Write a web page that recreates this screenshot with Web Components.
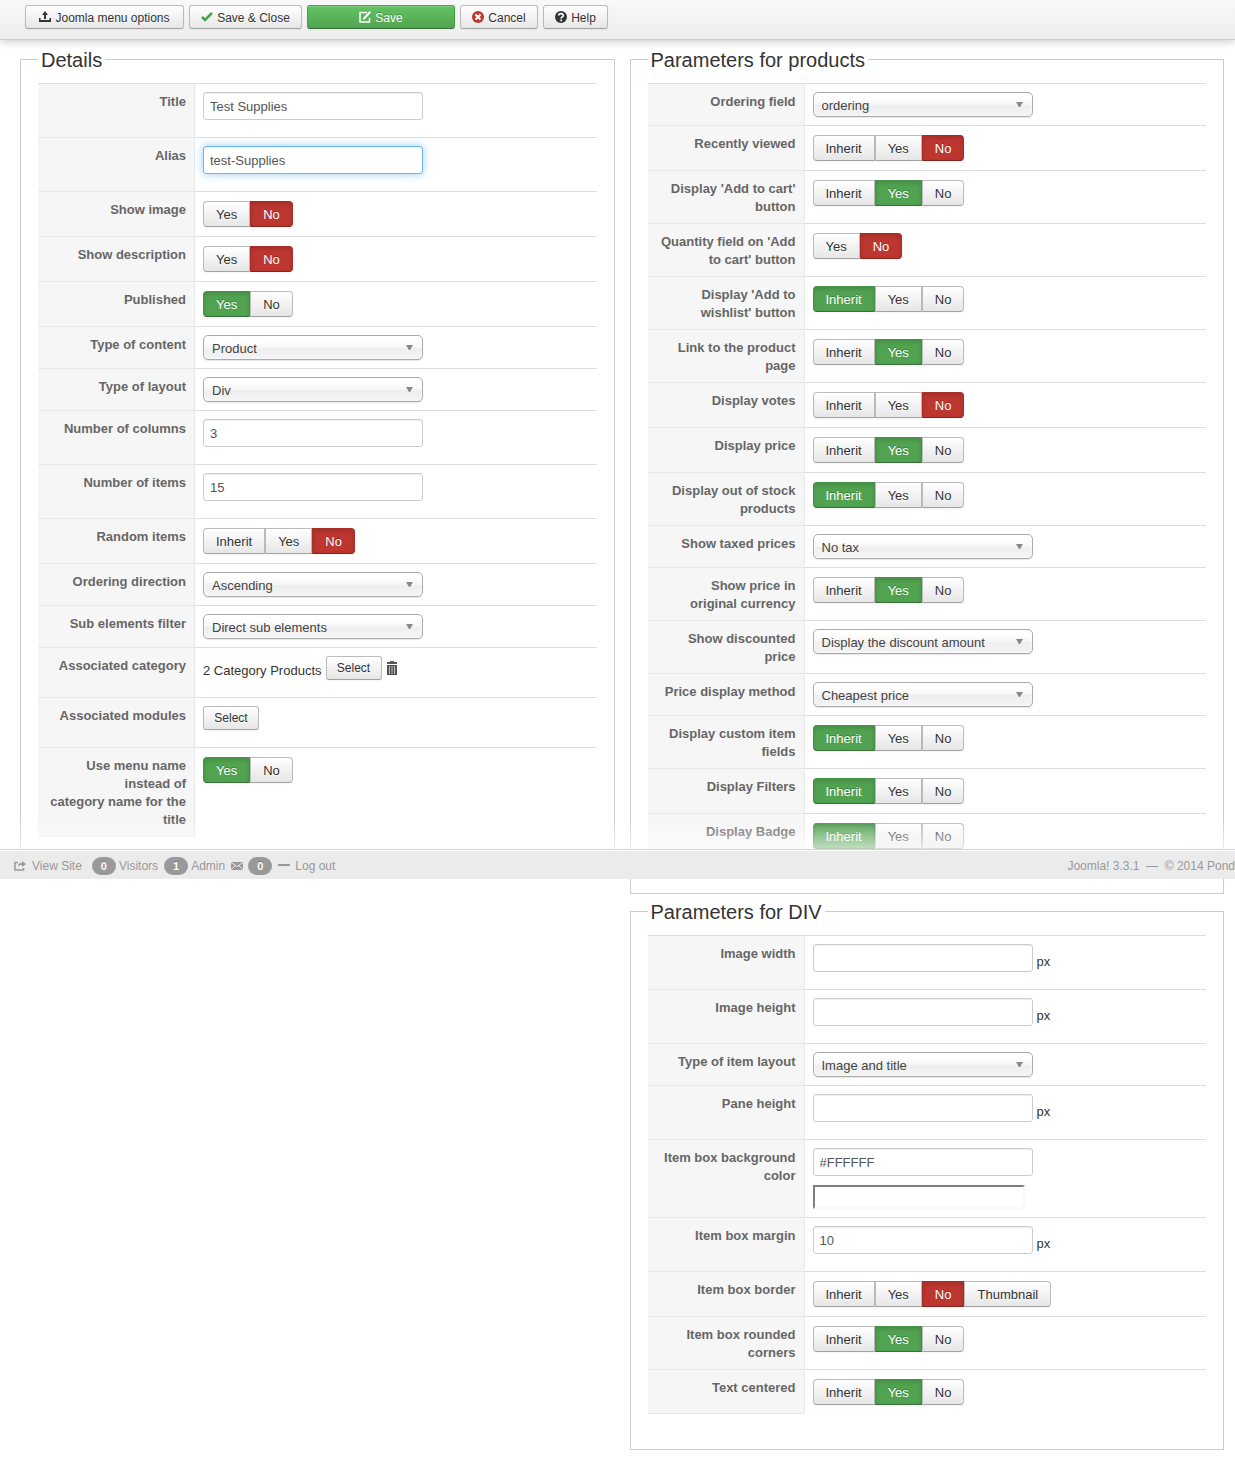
<!DOCTYPE html>
<html lang="en">
<head>
    <meta charset="utf-8" />
    <title>Joomla menu options</title>
    <style>
        body {
            margin: 0;
            position: relative;
            background: #fff;
            color: #333;
            font: 13px/18px "Liberation Sans", Arial, sans-serif;
        }
        main {
            display: grid;
            grid-template-columns: 1fr 1fr;
            align-items: start;
            gap: 15px;
            padding: 8px 11px 14px 20px;
        }
        .column {
            display: grid;
            gap: 6px;
        }
    </style>
</head>
<body>
    <tool-bar>
        <tool-button icon="upload" style="--width: 159px">Joomla menu options</tool-button>
        <tool-button icon="check" style="--width: 113px">Save &amp; Close</tool-button>
        <tool-button icon="edit" class="primary" style="--width: 148px">Save</tool-button>
        <tool-button icon="cancel" style="--width: 78px">Cancel</tool-button>
        <tool-button icon="help" style="--width: 65px">Help</tool-button>
    </tool-bar>

    <main>
        <div class="column">
            <option-panel heading="Details">
                <text-field label="Title" value="Test Supplies"></text-field>
                <text-field label="Alias" value="test-Supplies" current></text-field>
                <choice-field label="Show image" options="Yes,No" value="No"></choice-field>
                <choice-field label="Show description" options="Yes,No" value="No"></choice-field>
                <choice-field label="Published" options="Yes,No" value="Yes"></choice-field>
                <list-field label="Type of content" value="Product"></list-field>
                <list-field label="Type of layout" value="Div"></list-field>
                <text-field label="Number of columns" value="3"></text-field>
                <text-field label="Number of items" value="15"></text-field>
                <choice-field label="Random items" value="No"></choice-field>
                <list-field label="Ordering direction" value="Ascending"></list-field>
                <list-field label="Sub elements filter" value="Direct sub elements"></list-field>
                <pick-field label="Associated category" value="2 Category Products"></pick-field>
                <pick-field label="Associated modules"></pick-field>
                <choice-field label="Use menu name instead of&#10;category name for the title" options="Yes,No" value="Yes"></choice-field>
            </option-panel>
        </div>

        <div class="column">
            <option-panel heading="Parameters for products">
                <list-field label="Ordering field" value="ordering"></list-field>
                <choice-field label="Recently viewed" value="No"></choice-field>
                <choice-field label="Display 'Add to cart' button" value="Yes"></choice-field>
                <choice-field label="Quantity field on 'Add to cart' button" options="Yes,No" value="No"></choice-field>
                <choice-field label="Display 'Add to wishlist' button" value="Inherit"></choice-field>
                <choice-field label="Link to the product page" value="Yes"></choice-field>
                <choice-field label="Display votes" value="No"></choice-field>
                <choice-field label="Display price" value="Yes"></choice-field>
                <choice-field label="Display out of stock products" value="Inherit"></choice-field>
                <list-field label="Show taxed prices" value="No tax"></list-field>
                <choice-field label="Show price in&#10;original currency" value="Yes"></choice-field>
                <list-field label="Show discounted price" value="Display the discount amount"></list-field>
                <list-field label="Price display method" value="Cheapest price"></list-field>
                <choice-field label="Display custom item fields" value="Inherit"></choice-field>
                <choice-field label="Display Filters" value="Inherit"></choice-field>
                <choice-field label="Display Badge" value="Inherit"></choice-field>
            </option-panel>

            <option-panel heading="Parameters for DIV">
                <text-field label="Image width" unit="px"></text-field>
                <text-field label="Image height" unit="px"></text-field>
                <list-field label="Type of item layout" value="Image and title"></list-field>
                <text-field label="Pane height" unit="px"></text-field>
                <color-field label="Item box background color" value="#FFFFFF"></color-field>
                <text-field label="Item box margin" value="10" unit="px"></text-field>
                <choice-field label="Item box border" options="Inherit,Yes,No,Thumbnail" value="No"></choice-field>
                <choice-field label="Item box rounded corners" value="Yes"></choice-field>
                <choice-field label="Text centered" value="Yes"></choice-field>
            </option-panel>
        </div>
    </main>

    <status-bar></status-bar>

<script>
const ICONS = {
    upload: '<path fill="currentColor" d="M6 0l3 4H7v4H5V4H3zM0 7h1.500v2h9V7H12v4H0z"/>',
    check: '<path fill="none" stroke="#46a546" stroke-width="2.500" d="M1 6l3 3 7-7"/>',
    edit: '<path fill="none" stroke="currentColor" stroke-width="1.5" d="M8 1.5H1v9.500h9.500V7"/><path fill="currentColor" d="M10.500 0L12 1.500 6 8l-2.500 1L4.500 6.500z"/>',
    cancel: '<circle cx="6" cy="6" r="6" fill="#bd362f"/><path stroke="#fff" stroke-width="2" d="M3.500 3.500l5 5m0-5l-5 5"/>',
    help: '<circle cx="6" cy="6" r="6" fill="#333"/><path fill="none" stroke="#fff" stroke-width="1.700" d="M3.800 4.600C3.800 2 8.300 2 8.300 4.500 8.300 6 6.200 5.800 6.200 7.500M6.200 8.500v1.700"/>',
    trash: '<path fill="#555" d="M4 0h4v1h3v2H1V1h3zM1 4h10v10H1z"/><path stroke="#bbb" d="M3.500 5v8M6 5v8M8.500 5v8"/>',
    share: '<path fill="none" stroke="currentColor" stroke-width="1.500" d="M4 2.500H1v7.500h8.500V8"/><path fill="currentColor" d="M8 1l4 3-4 3V5H6L4 6.500C4 4 5 3 8 3z"/>',
    mail: '<path fill="currentColor" d="M0 2h12v8H0z"/><path fill="none" stroke="#ebebeb" d="M0 2.500l6 4 6-4M0 9.500l4-3.500m8 3.500L8 6"/>',
    minus: '<path fill="currentColor" d="M0 4h12v2H0z"/>'
};

function icon (name) {
    const height = name === 'trash' ? 14 : 12;
    return `<svg width="12" height="${height}" viewBox="0 0 12 ${height}" aria-hidden="true">${ICONS[name]}</svg>`;
}

const BUTTON_STYLE = `
    button {
        height: 24px;
        padding: 0 10px;
        border: 1px solid #bbb;
        border-bottom-color: #a2a2a2;
        border-radius: 3px;
        background: linear-gradient(#fff, #e6e6e6);
        box-shadow: inset 0 1px 0 rgba(255, 255, 255, 0.2), 0 1px 2px rgba(0, 0, 0, 0.05);
        color: #333;
        font: 12px/18px "Liberation Sans", Arial, sans-serif;
        text-shadow: 0 1px 1px rgba(255, 255, 255, 0.75);
        white-space: nowrap;
    }`;

customElements.define('tool-bar', class extends HTMLElement {
    constructor () {
        super();
        this.attachShadow({mode: 'open'});
        this.shadowRoot.innerHTML = `
            <style>
                :host {
                    display: flex;
                    gap: 5px;
                    padding: 5px 25px 10px;
                    border-bottom: 1px solid #d0d0d0;
                    background: linear-gradient(#f9f9f9, #ededed);
                    box-shadow: 0 2px 8px rgba(0, 0, 0, 0.2);
                }
            </style>
            <slot></slot>`;
    }
});

customElements.define('tool-button', class extends HTMLElement {
    constructor () {
        super();
        this.attachShadow({mode: 'open'});
    }

    connectedCallback () {
        this.shadowRoot.innerHTML = `
            <style>
                :host { display: block; }
                ${BUTTON_STYLE}
                button {
                    display: flex;
                    align-items: center;
                    justify-content: center;
                    gap: 4px;
                    min-width: var(--width);
                }
                span { padding-top: 2px; }
                :host(.primary) button {
                    border-color: #46a046 #46a046 #387038;
                    background: linear-gradient(#62c462, #51a351);
                    color: #fff;
                    text-shadow: 0 -1px 0 rgba(0, 0, 0, 0.25);
                }
            </style>
            <button type="button">${icon(this.getAttribute('icon'))}<span><slot></slot></span></button>`;
    }
});

customElements.define('option-panel', class extends HTMLElement {
    constructor () {
        super();
        this.attachShadow({mode: 'open'});
    }

    connectedCallback () {
        this.shadowRoot.innerHTML = `
            <style>
                :host { display: block; }
                fieldset {
                    min-width: 0;
                    margin: 0;
                    padding: 13px 17px 35px;
                    border: 1px solid #ccc;
                }
                legend {
                    padding: 2px 3px 0;
                    font-size: 20px;
                    line-height: 20px;
                }
            </style>
            <fieldset>
                <legend>${this.getAttribute('heading')}</legend>
                <slot></slot>
            </fieldset>`;
    }
});

// One row of a panel: caption cell on the left, control on the right
class Field extends HTMLElement {
    constructor () {
        super();
        this.attachShadow({mode: 'open'});
    }

    get value () {
        return this.getAttribute('value') || '';
    }

    connectedCallback () {
        this.shadowRoot.innerHTML = `
            <style>
                :host {
                    display: grid;
                    grid-template-columns: 157px 1fr;
                }
                .caption {
                    padding: 9px 8px 7px;
                    border-top: 1px solid #e8e8e8;
                    border-right: 1px solid #e8e8e8;
                    background: #f6f6f6;
                    color: #666;
                    font-weight: bold;
                    text-align: right;
                    white-space: pre-line;
                }
                :host(:first-child) .caption { border-top-color: #ddd; }
                :host(:last-child) .caption { border-bottom: 1px solid #e8e8e8; }
                .control {
                    padding: 8px;
                    border-top: 1px solid #ddd;
                }
                .line {
                    display: flex;
                    align-items: end;
                    gap: 4px;
                    line-height: 20px;
                }
                .spaced { margin-bottom: 9px; }
                input[type=text] {
                    box-sizing: border-box;
                    width: 220px;
                    height: 28px;
                    padding: 4px 6px;
                    border: 1px solid #ccc;
                    border-radius: 3px;
                    box-shadow: inset 0 1px 1px rgba(0, 0, 0, 0.075);
                    background: #fff;
                    color: #555;
                    font: inherit;
                }
                ${this.styles()}
            </style>
            ${this.caption()}
            <div class="control">${this.control()}</div>`;
    }

    caption () {
        return `<label class="caption" for="control">${this.getAttribute('label')}</label>`;
    }

    styles () {
        return '';
    }
}

customElements.define('text-field', class extends Field {
    styles () {
        return `
            :host([current]) input {
                border-color: #6fb6ee;
                box-shadow: inset 0 1px 1px rgba(0, 0, 0, 0.075), 0 0 8px rgba(82, 168, 236, 0.6);
            }`;
    }

    control () {
        const unit = this.getAttribute('unit');
        return `
            <div class="line spaced">
                <input type="text" id="control" value="${this.value}">
                ${unit ? `<span>${unit}</span>` : ''}
            </div>`;
    }
});

customElements.define('color-field', class extends Field {
    styles () {
        return `
            .preview {
                width: 208px;
                height: 20px;
                border: 2px solid #fafafa;
                border-top-color: #808080;
                border-left-color: #808080;
                background: ${this.value};
            }`;
    }

    control () {
        return `
            <div class="line spaced"><input type="text" id="control" value="${this.value}"></div>
            <div class="preview"></div>`;
    }
});

customElements.define('list-field', class extends Field {
    styles () {
        return `
            .list {
                display: grid;
                align-items: center;
                width: 220px;
            }
            select, svg { grid-area: 1 / 1; }
            select {
                appearance: none;
                height: 25px;
                padding: 2px 8px 0;
                border: 1px solid #aaa;
                border-radius: 5px;
                background: linear-gradient(#fff 20%, #f6f6f6 50%, #eee 52%, #f4f4f4);
                box-shadow: inset 0 0 3px #fff, 0 1px 1px rgba(0, 0, 0, 0.1);
                color: #444;
                font: inherit;
            }
            svg {
                justify-self: end;
                margin-right: 10px;
                pointer-events: none;
            }`;
    }

    control () {
        return `
            <div class="list">
                <select id="control"><option>${this.value}</option></select>
                <svg width="7" height="5" aria-hidden="true"><path fill="#888" d="M0 0h7L4 5H3z"/></svg>
            </div>`;
    }
});

customElements.define('choice-field', class extends Field {
    caption () {
        return `<div class="caption" id="caption">${this.getAttribute('label')}</div>`;
    }

    styles () {
        return `
            .group {
                display: flex;
                padding: 1px 0;
            }
            input {
                appearance: none;
                position: absolute;
                margin: 0;
            }
            label {
                padding: 4px 12px 2px;
                border: 1px solid #bbb;
                border-bottom-color: #a2a2a2;
                background: linear-gradient(#fff, #e6e6e6);
                box-shadow: inset 0 1px 0 rgba(255, 255, 255, 0.2), 0 1px 2px rgba(0, 0, 0, 0.05);
                text-shadow: 0 1px 1px rgba(255, 255, 255, 0.75);
            }
            label:first-child { border-radius: 4px 0 0 4px; }
            label:last-child { border-radius: 0 4px 4px 0; }
            label:has(:checked) {
                border-color: #499249 #499249 #387038;
                background: #51a351;
                box-shadow: inset 0 2px 4px rgba(0, 0, 0, 0.15), 0 1px 2px rgba(0, 0, 0, 0.05);
                color: #fff;
                text-shadow: 0 -1px 0 rgba(0, 0, 0, 0.25);
            }
            label:has([value=No]:checked) {
                border-color: #a9302a #a9302a #802420;
                background: #bd362f;
            }`;
    }

    control () {
        const options = (this.getAttribute('options') || 'Inherit,Yes,No').split(',');
        const buttons = options.map(option => `<label><input type="radio" name="choice" value="${option}"${option === this.value ? ' checked' : ''}>${option}</label>`);
        return `<div class="group" role="radiogroup" aria-labelledby="caption">${buttons.join('')}</div>`;
    }
});

customElements.define('pick-field', class extends Field {
    styles () {
        return `
            ${BUTTON_STYLE}
            .line { line-height: 18px; }
            #control { min-width: 56px; }
            .remove {
                display: flex;
                align-items: center;
                padding: 0;
                border: 0;
                background: none;
                box-shadow: none;
            }`;
    }

    control () {
        return `
            <div class="line spaced">
                ${this.value ? `<span>${this.value}</span>` : ''}
                <button type="button" id="control">Select</button>
                ${this.value ? `<button type="button" class="remove" aria-label="Delete">${icon('trash')}</button>` : ''}
            </div>`;
    }
});

customElements.define('status-bar', class extends HTMLElement {
    constructor () {
        super();
        this.attachShadow({mode: 'open'});
        this.shadowRoot.innerHTML = `
            <style>
                /* floats over the panels, with a haze above it */
                :host {
                    position: absolute;
                    top: 819px;
                    left: 0;
                    right: 0;
                    font-size: 12px;
                    color: #999;
                }
                .haze {
                    height: 30px;
                    background: linear-gradient(rgba(255, 255, 255, 0), rgba(255, 255, 255, 0.65));
                }
                .bar {
                    display: flex;
                    align-items: center;
                    justify-content: space-between;
                    padding: 7px 0 4px 14px;
                    border-top: 1px solid #d4d4d4;
                    background: #ebebeb;
                    box-shadow: inset 0 1px 0 #fff;
                    overflow: hidden;
                    white-space: nowrap;
                }
                .links, .links a, .links span {
                    display: flex;
                    align-items: center;
                }
                .links { gap: 6px; }
                .links a { gap: 5px; }
                .links span { gap: 3px; }
                .links .site {
                    gap: 6px;
                    margin-right: 4px;
                }
                a {
                    color: inherit;
                    text-decoration: none;
                }
                b {
                    padding: 0 9px;
                    border-radius: 9px;
                    background: #999;
                    color: #fff;
                    font-size: 11px;
                    text-shadow: 0 -1px 0 rgba(0, 0, 0, 0.25);
                }
            </style>
            <div class="haze"></div>
            <div class="bar">
                <div class="links">
                    <a class="site" href="#">${icon('share')}View Site</a>
                    <span><b>0</b>Visitors</span>
                    <span><b>1</b>Admin</span>
                    <a href="#" aria-label="Messages">${icon('mail')}<b>0</b></a>
                    <a href="#">${icon('minus')}Log out</a>
                </div>
                <div>Joomla! 3.3.1 &nbsp;&mdash;&nbsp; &copy; 2014 Pond</div>
            </div>`;
    }
});
</script>
</body>
</html>
